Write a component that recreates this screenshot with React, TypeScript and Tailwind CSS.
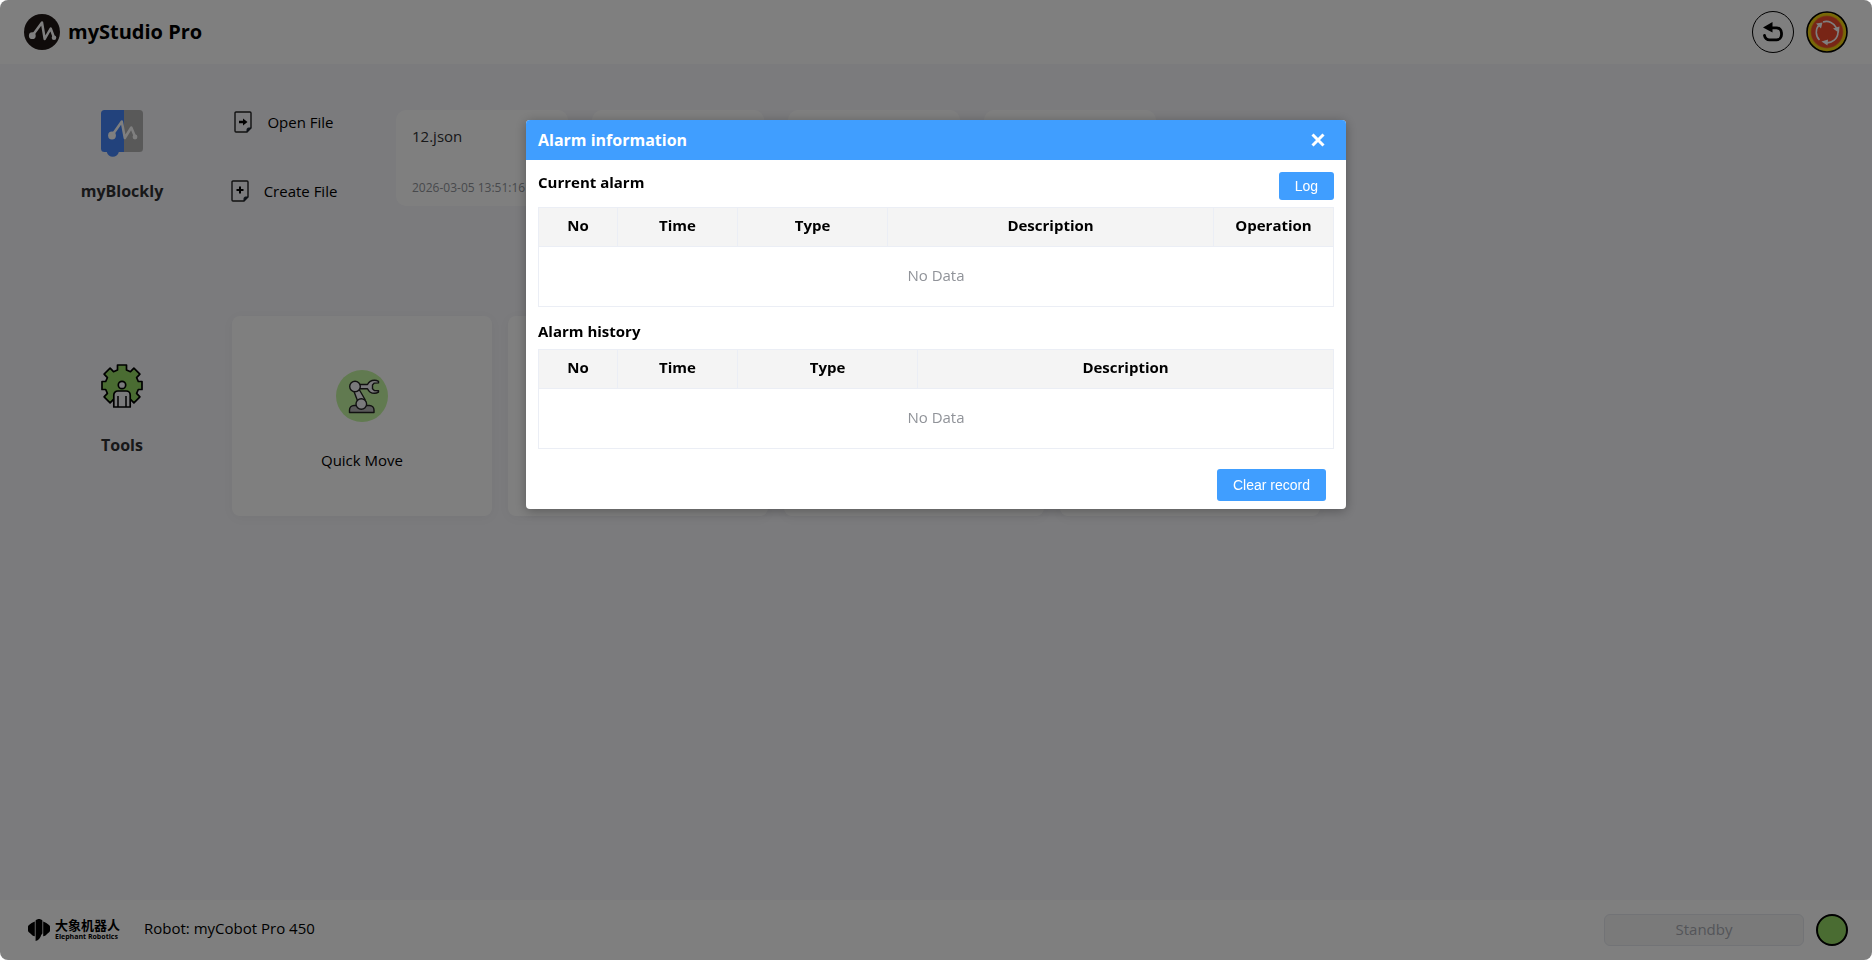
import type { ReactNode } from "react";

const files = [{ name: "12.json", date: "2026-03-05 13:51:16" }, null, null, null];

const tools = ["Quick Move", "", "", ""];

function LogoIcon() {
  return (
    <svg viewBox="0 0 36 36" className="size-9 shrink-0" aria-hidden="true">
      <circle cx="18" cy="18" r="18" fill="#1f1614" />
      <path d="M8.500 21.500 18 8.500l2.700 16.500 6-10.500 3.300 9" fill="none" stroke="#fff" strokeWidth="2.500" strokeLinejoin="round" strokeLinecap="round" />
      <circle cx="8.300" cy="21.700" r="3.400" fill="#fff" />
      <circle cx="30" cy="23.800" r="2.300" fill="#fff" />
    </svg>
  );
}

function BlocklyIcon() {
  return (
    <svg viewBox="0 0 42 47" className="h-[47px] w-[42px]" aria-hidden="true">
      <path d="M23 0h15.500a3.500 3.500 0 0 1 3.500 3.500v35a3.500 3.500 0 0 1-3.500 3.500H23z" fill="#b3b3b3" />
      <path d="M3.500 0H23v42h-5.200c-.6 3-3.200 4.800-6 4.800S6.400 45 5.800 42H3.500A3.500 3.500 0 0 1 0 38.500v-35A3.500 3.500 0 0 1 3.500 0z" fill="#4484f8" />
      <path d="M11 25.500 20.800 11.500l3 16.500 6.500-10.500 3.700 9" fill="none" stroke="#fff" strokeWidth="2.500" strokeLinejoin="round" strokeLinecap="round" />
      <circle cx="11" cy="25.500" r="3.900" fill="#fff" />
      <circle cx="34" cy="27" r="2.400" fill="#fff" />
    </svg>
  );
}

function FileIcon({ children }: { children: ReactNode }) {
  return (
    <svg viewBox="0 0 18 22" className="h-[22px] w-[18px]" fill="none" aria-hidden="true">
      <path d="M2 1h14a1 1 0 0 1 1 1v15l-4 4H2a1 1 0 0 1-1-1V2a1 1 0 0 1 1-1z" stroke="#222" strokeWidth="1.400" />
      <path d="M17 17h-2.500a1.500 1.500 0 0 0-1.500 1.500V21z" fill="#1b2430" stroke="#1b2430" />
      {children}
    </svg>
  );
}

function ToolsIcon() {
  return (
    <svg viewBox="0 0 42 44" className="h-11 w-[42px]" strokeLinejoin="round" aria-hidden="true">
      <path
        d="M16.500 1h9v5l4 1.700 3.400-3.500 6 6-3.300 3.500 1.700 3.800H41v8h-3.700l-1.700 3.800 3.300 3.500-6 6-3.400-3.500h-17l-3.400 3.500-6-6 3.300-3.500-1.700-3.800H1v-8h3.700l1.700-3.800-3.300-3.500 6-6 3.400 3.500 4-1.700z"
        fill="#94d864"
        stroke="#000"
        strokeWidth="1.700"
      />
      <circle cx="21" cy="21" r="3.700" fill="#f5f5f8" stroke="#000" strokeWidth="1.700" />
      <path d="M12.800 43V31a4 4 0 0 1 4-4h8.400a4 4 0 0 1 4 4v12z" fill="#f5f5f8" stroke="#000" strokeWidth="1.700" />
      <path d="M17 32v11M25 32v11" stroke="#000" strokeWidth="1.500" />
    </svg>
  );
}

function RobotArmIcon() {
  return (
    <svg viewBox="0 0 52 52" className="size-[52px]" strokeLinejoin="round" aria-hidden="true">
      <circle cx="26" cy="26" r="26" fill="#c3f4a0" />
      <g stroke="#222" strokeWidth="1.400">
        <path d="M13.500 42.500v-2.500a4.500 4.500 0 0 1 4.500-4.500h15.500A4.500 4.500 0 0 1 38 40v2.500z" fill="#b4b4b4" />
        <path d="m18 21.500 4 10.500 7-2.500-5.500-9.500z" fill="#f5f5f8" />
        <path d="M23.500 14.500h8c1.200-2.700 4-4.300 7-4.300 1.500 0 2.800.4 4 1.100v1.600l-4.200.2-1.800 1.800v3.800l1.800 1.800 4.200.2v1.400c-1.200.8-2.500 1.200-4 1.200-3 0-5.800-1.800-7-4.600h-8z" fill="#f5f5f8" />
        <circle cx="19" cy="16.500" r="5.300" fill="#f5f5f8" />
        <circle cx="25.300" cy="34" r="5.300" fill="#f5f5f8" />
      </g>
    </svg>
  );
}

function ElephantLogo() {
  return (
    <div className="flex items-center gap-[5px]">
      <svg viewBox="0 0 22 22" className="size-[22px]" aria-hidden="true">
        <path d="M6.800 2.500v14.800C5 17 3.800 16.300 3 15L.6 13C.2 12.500 0 12 0 11.500V8c0-1 .3-1.500 1-2 1.700-1.300 3.500-2.700 5.800-3.500zM15.200 2.500v14.800c1.800-.3 3-1 3.800-2.300l2.400-2c.4-.5.600-1 .600-1.500V8c0-1-.3-1.500-1-2-1.700-1.300-3.500-2.700-5.800-3.500z" />
        <path d="M7.600 1.500C8.500.5 9.700 0 11 0s2.500.5 3.400 1.500V14.500l-1.200 1.500c-.7 2.800-2.500 5.500-5.600 6z" />
      </svg>
      <div className="flex flex-col text-black">
        <span className="font-['Noto_Sans_CJK_SC',sans-serif] text-[13px] leading-[14px] font-bold">大象机器人</span>
        <span className="text-[7px] leading-[10px] font-bold">Elephant Robotics</span>
      </div>
    </div>
  );
}

function AlarmTable({ columns }: { columns: { label: string; width?: string }[] }) {
  return (
    <table className="w-full table-fixed border-separate border-spacing-0 border border-[#ebeef5] text-center">
      <thead>
        <tr>
          {columns.map((column) => (
            <th
              key={column.label}
              className={`h-[39px] border-r border-b border-[#ebeef5] bg-[#f4f4f4] pb-1 font-bold text-black last:border-r-0 ${column.width ?? ""}`}
            >
              {column.label}
            </th>
          ))}
        </tr>
      </thead>
      <tbody>
        <tr>
          <td colSpan={columns.length} className="h-[59px] pb-1 text-[#909399]">
            No Data
          </td>
        </tr>
      </tbody>
    </table>
  );
}

function AlarmDialog() {
  return (
    <div className="fixed inset-0 flex items-start justify-center rounded-lg bg-black/50 pt-30">
      <div
        role="dialog"
        aria-labelledby="alarm-title"
        className="w-full max-w-[820px] overflow-hidden rounded bg-white text-black shadow-[0_2px_12px_rgba(0,0,0,0.3)]"
      >
        <div className="flex h-10 items-center justify-between bg-[#409eff] pr-4 pl-3 text-white">
          <h2 id="alarm-title" className="text-base font-bold">
            Alarm information
          </h2>
          <button aria-label="Close" className="p-1">
            <svg viewBox="0 0 16 16" className="size-4" stroke="currentColor" strokeWidth="3" aria-hidden="true">
              <path d="m2.500 2.500 11 11M13.500 2.500l-11 11" />
            </svg>
          </button>
        </div>
        <div className="px-3 pt-3 pb-2">
          <div className="mb-[7px] flex h-7 items-start justify-between">
            <h3 className="leading-5 font-bold">Current alarm</h3>
            <button className="h-7 rounded-[3px] bg-[#409eff] px-4 font-['Liberation_Sans',sans-serif] text-sm text-white">
              Log
            </button>
          </div>
          <AlarmTable
            columns={[
              { label: "No", width: "w-[79px]" },
              { label: "Time", width: "w-[120px]" },
              { label: "Type", width: "w-[150px]" },
              { label: "Description" },
              { label: "Operation", width: "w-[119px]" },
            ]}
          />
          <h3 className="mt-3.5 mb-2 leading-5 font-bold">Alarm history</h3>
          <AlarmTable
            columns={[
              { label: "No", width: "w-[79px]" },
              { label: "Time", width: "w-[120px]" },
              { label: "Type", width: "w-[180px]" },
              { label: "Description" },
            ]}
          />
          <div className="mt-5 flex justify-end pr-2">
            <button className="h-8 rounded-[3px] bg-[#409eff] px-4 font-['Liberation_Sans',sans-serif] text-sm text-white">
              Clear record
            </button>
          </div>
        </div>
      </div>
    </div>
  );
}

export default function App() {
  return (
    <div className="flex min-h-screen flex-col bg-white font-['Open_Sans','Noto_Sans_CJK_SC',sans-serif] text-[15px] leading-5 text-black">
      <header className="flex h-16 items-center justify-between px-6">
        <div className="flex items-center gap-2">
          <LogoIcon />
          <h1 className="text-xl font-bold">myStudio Pro</h1>
        </div>
        <div className="flex items-center gap-3">
          <button aria-label="Back" className="flex size-[42px] items-center justify-center rounded-full border border-black">
            <svg viewBox="0 0 20 20" className="size-5" aria-hidden="true">
              <path d="M8 5.800h5.500a5 5 0 0 1 5 5v2a5 5 0 0 1-5 5h-7a5 5 0 0 1-5-4.300" fill="none" stroke="#000" strokeWidth="2.800" strokeLinecap="round" />
              <path d="M0 5.500 9.500 0v10.500z" />
            </svg>
          </button>
          <button aria-label="Emergency stop" className="rounded-full">
            <svg viewBox="0 0 42 42" className="size-[42px]" aria-hidden="true">
              <circle cx="21" cy="21" r="20" fill="#f0d010" stroke="#000" strokeWidth="1.600" />
              <circle cx="21" cy="21" r="16.400" fill="#f08a20" />
              <circle cx="21" cy="21" r="15.700" fill="#f04a2c" />
              <g fill="none" stroke="#fff" strokeWidth="1.600">
                <path d="M17 11a11 11 0 0 1 13.500 6" />
                <path d="M32 21a11 11 0 0 1-12.500 10.800" />
                <path d="M13.500 29a11 11 0 0 1-.500-15" />
              </g>
              <path d="m27 17.500 6.500-2-.5 6.500zM22 28.500l-.500 6-6-4zM10 12.500l6.500-1-1.500 6z" fill="#fff" />
            </svg>
          </button>
        </div>
      </header>

      <main className="flex flex-1 flex-col gap-[110px] bg-[#f6f6fa] px-16 pt-[46px]">
        <section className="flex gap-[52px]">
          <div className="flex w-[116px] shrink-0 flex-col items-center gap-[22px]">
            <BlocklyIcon />
            <h2 className="text-base leading-6 font-bold text-[#303133]">myBlockly</h2>
          </div>
          <div className="flex gap-15">
            <div className="flex w-[104px] shrink-0 flex-col items-center justify-between pt-px pb-1 whitespace-nowrap">
              <button className="flex items-center gap-[15px]">
                <FileIcon>
                  <path d="M5 9.700h4V7.500l4.500 3.500L9 14.500v-2.200H5z" fill="#000" />
                </FileIcon>
                Open File
              </button>
              <button className="flex items-center gap-[15px]">
                <FileIcon>
                  <path d="M9 6.500v7M5.500 10h7" stroke="#000" strokeWidth="2" />
                </FileIcon>
                Create File
              </button>
            </div>
            <div className="flex gap-6">
              {files.map((file, i) => (
                <div key={i} className="flex h-24 w-[172px] flex-col justify-between rounded-[10px] bg-white px-4 pt-4 pb-2 whitespace-nowrap">
                  <span className="text-[#303133]">{file?.name}</span>
                  <span className="text-xs leading-5 text-[#909399]">{file?.date}</span>
                </div>
              ))}
            </div>
          </div>
        </section>

        <section className="flex gap-[52px]">
          <div className="flex w-[116px] shrink-0 flex-col items-center gap-[25px] pt-12">
            <ToolsIcon />
            <h2 className="text-base leading-6 font-bold text-[#303133]">Tools</h2>
          </div>
          <div className="flex gap-4">
            {tools.map((tool, i) => (
              <div
                key={i}
                className="flex h-[200px] w-[260px] flex-col items-center justify-center gap-7 rounded-lg bg-white pt-2 shadow-[0_2px_12px_rgba(0,0,0,0.04)]"
              >
                {tool && (
                  <>
                    <RobotArmIcon />
                    <span>{tool}</span>
                  </>
                )}
              </div>
            ))}
          </div>
        </section>
      </main>

      <footer className="flex h-15 items-center justify-between px-6">
        <div className="flex items-center gap-6 pl-1">
          <ElephantLogo />
          <span className="pb-1">Robot: myCobot Pro 450</span>
        </div>
        <div className="flex items-center gap-3">
          <button disabled className="h-8 w-[200px] rounded-md border border-[#e4e7ed] bg-[#f5f5f5] pb-0.5 text-[#a8abb2]">
            Standby
          </button>
          <span className="size-8 rounded-full border-2 border-black bg-[#94d864]" />
        </div>
      </footer>

      <AlarmDialog />
    </div>
  );
}
